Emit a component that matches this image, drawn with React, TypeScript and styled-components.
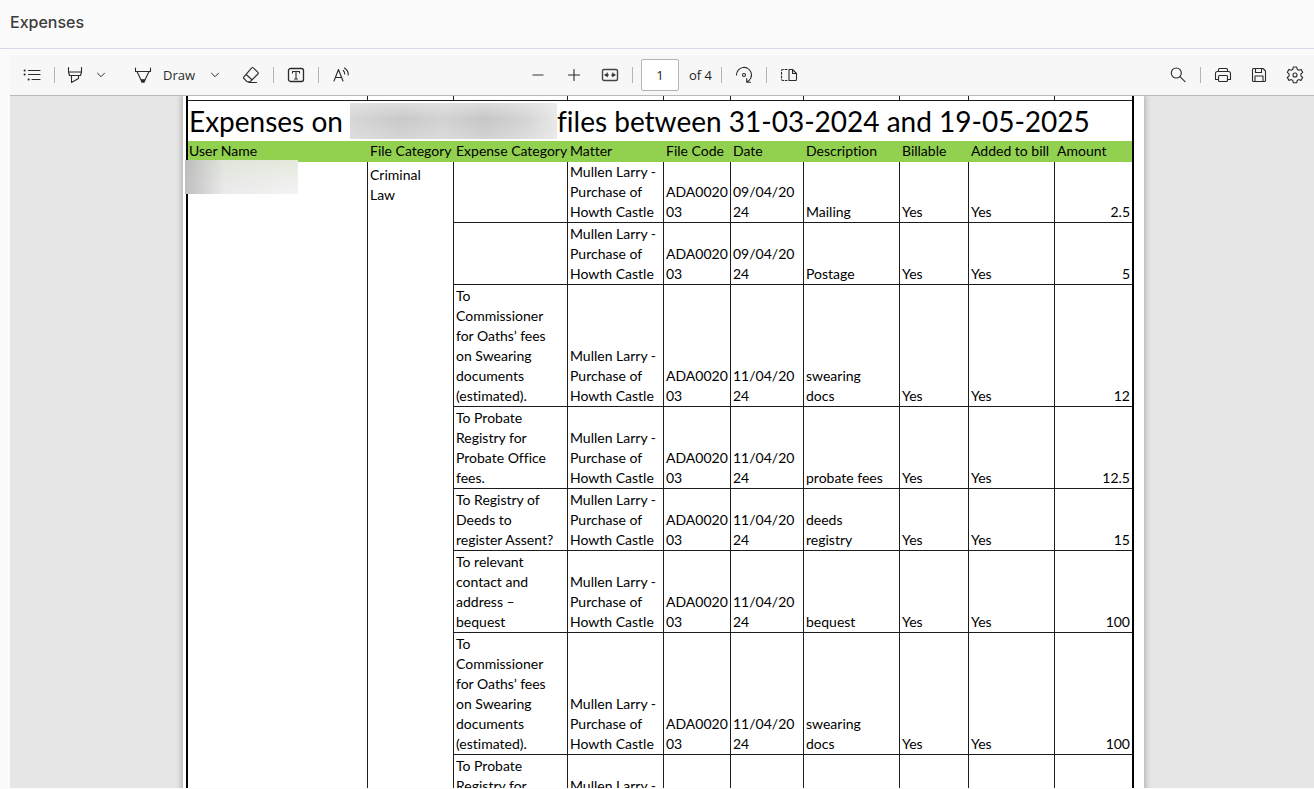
import React from 'react';
import styled, { createGlobalStyle } from 'styled-components';

const GlobalStyle = createGlobalStyle`
  *, *::before, *::after { box-sizing: border-box; }
  body { margin: 0; background: #fbfbfb; font-family: "Open Sans", sans-serif; color: #222; }
`;

const Shell = styled.div`
  display: flex;
  flex-direction: column;
  height: 100vh;
  padding-bottom: 1px;
  overflow: hidden;
`;

const TitleBar = styled.header`
  flex: none;
  height: 49px;
  padding: 0 10px;
  border-bottom: 1px solid #d9d9ea;
`;

const PageTitle = styled.h1`
  margin: 0;
  font: 500 16px/44px Inter, sans-serif;
  color: #3c3c3c;
`;

const Viewer = styled.main`
  flex: 1;
  min-height: 0;
  display: flex;
  flex-direction: column;
  margin: 6px 0 0 10px;
`;

const Toolbar = styled.div`
  flex: none;
  display: grid;
  grid-template-columns: 1fr auto 1fr;
  align-items: center;
  height: 41px;
  padding: 0 5px 0 8px;
  background: #f7f7f7;
  border-bottom: 1px solid #bababa;
`;

const ToolGroup = styled.div<{ $end?: boolean }>`
  display: flex;
  align-items: center;
  gap: 8px;
  justify-content: ${p => (p.$end ? 'flex-end' : 'flex-start')};
`;

const SplitTool = styled.div<{ $spaced?: boolean }>`
  display: flex;
  align-items: center;
  margin-left: ${p => (p.$spaced ? '6px' : '0')};
`;

const ToolButton = styled.button<{ $w?: number }>`
  display: flex;
  align-items: center;
  justify-content: center;
  width: ${p => p.$w ?? 28}px;
  height: 32px;
  padding: 0;
  border: 0;
  background: none;
  color: #2b2b2b;
`;

const DrawButton = styled(ToolButton)`
  width: 72px;
  padding-left: 5px;
  gap: 11px;
  justify-content: flex-start;
  font: 13px/20px "Open Sans", sans-serif;
`;

const Separator = styled.span`
  width: 1px;
  height: 16px;
  background: #b5b5b5;
`;

const PageField = styled.label`
  display: flex;
  align-items: center;
  gap: 10px;
  width: 72px;
  font-size: 13px;
  white-space: nowrap;
`;

const PageInput = styled.input`
  flex: none;
  width: 38px;
  height: 32px;
  padding: 0;
  border: 1px solid #b4b4b4;
  border-radius: 2px;
  background: #fff;
  color: #222;
  font: 13px "Open Sans", sans-serif;
  text-align: center;
`;

const Canvas = styled.div`
  flex: 1;
  min-height: 0;
  overflow: hidden;
  padding-left: 3px;
  background: #e6e6e6;
`;

const Sheet = styled.article`
  width: 961px;
  min-height: 100%;
  margin: 0 auto;
  padding: 0 10px 0 3px;
  background: #fff;
  box-shadow: 0 0 6px 1px rgba(0, 0, 0, 0.28);
`;

const Table = styled.table`
  width: 100%;
  table-layout: fixed;
  border-collapse: separate;
  border-spacing: 0;
  border-left: 2px solid #000;
  border-right: 2px solid #000;
  color: #000;
  font: 14px/20px Lato, sans-serif;
  font-variant-ligatures: none;
`;

const Cell = styled.td<{ $align?: string; $first?: boolean; $open?: boolean; $right?: boolean }>`
  padding: 0 2px;
  border-left: ${p => (p.$first ? '0' : '1px solid #1c1c1c')};
  border-bottom: ${p => (p.$open ? '0' : '1px solid #1c1c1c')};
  vertical-align: ${p => p.$align ?? 'bottom'};
  text-align: ${p => (p.$right ? 'right' : 'left')};
  white-space: pre;
`;

const SpanCell = styled(Cell)`
  position: relative;
  padding-top: 3px;
`;

const BannerCell = styled.th`
  height: 40px;
  padding: 0 1px;
  text-align: left;
  font: 28px/40px Lato, sans-serif;
  font-variant-ligatures: none;
`;

const Banner = styled.div`
  display: flex;
  align-items: center;
  white-space: nowrap;
`;

const BannerLead = styled.span`
  width: 161px;
`;

const HeadCell = styled.th<{ $first?: boolean }>`
  height: 21px;
  padding: 0 0 0 ${p => (p.$first ? 1 : 3)}px;
  background: #92d050;
  text-align: left;
  vertical-align: top;
  font-weight: 400;
  white-space: nowrap;
`;

const RedactedTitle = styled.span`
  width: 207px;
  height: 36px;
  background:
    linear-gradient(180deg, rgba(240, 240, 240, 0.5), rgba(240, 240, 240, 0) 45%, rgba(240, 240, 240, 0.3)),
    linear-gradient(90deg, #d6d6d6, #c9c9c9 25%, #d2d2d2 45%, #c6c6c6 65%, #d4d4d4 85%, #e8e8e8);
`;

const RedactedUser = styled.span`
  position: absolute;
  left: -3px;
  top: -2px;
  width: 113px;
  height: 34px;
  background:
    linear-gradient(90deg, rgba(185, 185, 185, 0.9), rgba(225, 225, 225, 0.5) 35%, rgba(240, 240, 240, 0.2)),
    linear-gradient(180deg, #dfe8d4, #eef0ec 60%, #f4f4f4);
`;

const Svg = ({ children, size = 18 }: { children: React.ReactNode; size?: number }) => (
  <svg width={size} height={size} viewBox={`0 0 ${size} ${size}`} fill="none" stroke="currentColor"
    strokeWidth="1.1" strokeLinecap="round" strokeLinejoin="round" aria-hidden="true">{children}</svg>
);

const Chevron = () => <Svg size={10}><path d="M1.5 3.2 5 6.7 8.5 3.2" strokeWidth="1" /></Svg>;

const columns: [string, number][] = [
  ['User Name', 179], ['File Category', 86], ['Expense Category', 114], ['Matter', 96], ['File Code', 67],
  ['Date', 73], ['Description', 96], ['Billable', 69], ['Added to bill', 86], ['Amount', 78],
];

const oaths = 'To\nCommissioner\nfor Oaths’ fees\non Swearing\ndocuments\n(estimated).';
const probate = 'To Probate\nRegistry for\nProbate Office\nfees.';

const rows: { h: number; category: string; date: string; description: string; amount: string }[] = [
  { h: 61, category: '', date: '09/04/20\n24', description: 'Mailing', amount: '2.5' },
  { h: 62, category: '', date: '09/04/20\n24', description: 'Postage', amount: '5' },
  { h: 122, category: oaths, date: '11/04/20\n24', description: 'swearing\ndocs', amount: '12' },
  { h: 82, category: probate, date: '11/04/20\n24', description: 'probate fees', amount: '12.5' },
  { h: 62, category: 'To Registry of\nDeeds to\nregister Assent?', date: '11/04/20\n24', description: 'deeds\nregistry', amount: '15' },
  { h: 82, category: 'To relevant\ncontact and\naddress –\nbequest', date: '11/04/20\n24', description: 'bequest', amount: '100' },
  { h: 122, category: oaths, date: '11/04/20\n24', description: 'swearing\ndocs', amount: '100' },
  { h: 82, category: probate, date: '', description: '', amount: '' },
];

const Row = styled.tr<{ $h: number }>`
  height: ${p => p.$h}px;
`;

export default function App() {
  return (
    <>
      <GlobalStyle />
      <Shell>
        <TitleBar><PageTitle>Expenses</PageTitle></TitleBar>
        <Viewer>
          <Toolbar role="toolbar" aria-label="Document tools">
            <ToolGroup>
              <ToolButton aria-label="Contents">
                <Svg><path d="M5.5 4.500h11.500M5.500 8.500h11.500M9 13.500h8" strokeWidth="1.200" /><path d="M1.500 4.500h.3M1.500 8.500h.3M5.500 13.500h.3" strokeWidth="1.800" /></Svg>
              </ToolButton>
              <Separator />
              <SplitTool>
                <ToolButton $w={24} aria-label="Highlight">
                  <Svg><path d="M2.500 1.500v4.500h13V1.500M2.500 6 3.500 9.500h11L15.500 6M5.500 9.500v7l7-4v-3" /></Svg>
                </ToolButton>
                <ToolButton aria-label="Highlight options"><Chevron /></ToolButton>
              </SplitTool>
              <SplitTool $spaced>
                <DrawButton>
                  <Svg><path d="M1.500 2v3.500h15V2M3 5.500l5 10.500h2l5-10.500" /><path d="M7.300 13.800h3.400L10 16H8Z" fill="currentColor" /></Svg>
                  Draw
                </DrawButton>
                <ToolButton aria-label="Draw options"><Chevron /></ToolButton>
              </SplitTool>
              <ToolButton aria-label="Erase">
                <Svg><path d="M9.700 1.900q.8-.7 1.600 0l4.600 4.500q.8.800 0 1.600L8.500 15.400q-.5.500-1.200.5H6q-.7 0-1.200-.5L1.900 12.500q-.8-.8 0-1.600ZM4.200 8.500l6 5.500M7 16.500h7.500" /></Svg>
              </ToolButton>
              <Separator />
              <ToolButton aria-label="Add text">
                <Svg><rect x="1.500" y="2.500" width="15" height="13" rx="2" strokeWidth="1.300" /><path d="M5.500 7V5.500h7V7M9 5.500v7.500M7.500 13h3" /></Svg>
              </ToolButton>
              <Separator />
              <ToolButton aria-label="Read aloud">
                <Svg><path d="M2 15 6.500 3.500l4.500 11.500M3.500 11.500h6M11.200 4.500q1.500 1.300 1.500 3.500M12.500 2q4.300 3 3.700 7" /></Svg>
              </ToolButton>
            </ToolGroup>
            <ToolGroup>
              <ToolButton aria-label="Zoom out"><Svg><path d="M4 9h10" stroke="#777" strokeWidth="1.500" /></Svg></ToolButton>
              <ToolButton aria-label="Zoom in"><Svg><path d="M3.500 9h11M9 3.500v11" /></Svg></ToolButton>
              <ToolButton aria-label="Fit to width">
                <Svg><rect x="1.500" y="3.500" width="15" height="11" rx="1.500" stroke="#444" strokeWidth="1.400" /><path d="M4 9h3.500M10.500 9H14" /><path d="M6.500 7v4L4 9ZM11.500 7v4L14 9Z" fill="currentColor" strokeWidth=".5" /></Svg>
              </ToolButton>
              <Separator />
              <PageField><PageInput aria-label="Page number" defaultValue="1" />of 4</PageField>
              <Separator />
              <ToolButton aria-label="Rotate">
                <Svg><path d="M1.500 9A7.500 7.500 0 1 1 12 15.800M11.700 12.500v3.700h3.800" /><circle cx="9" cy="9" r="1.500" /></Svg>
              </ToolButton>
              <Separator />
              <ToolButton aria-label="Page view">
                <Svg><path d="M9 3.500h3.500l4 4v6q0 1-1 1H9ZM12.500 3.500v4h4" /><path d="M7 3.500H3q-1.500 0-1.500 1.500v8q0 1.500 1.500 1.500h4" strokeDasharray="2 1.700" /></Svg>
              </ToolButton>
            </ToolGroup>
            <ToolGroup $end>
              <ToolButton aria-label="Search">
                <Svg><circle cx="7.300" cy="7" r="5" /><path d="m11 10.700 5 5" /></Svg>
              </ToolButton>
              <Separator />
              <ToolButton aria-label="Print">
                <Svg><path d="M4.500 5.500v-2q0-1 1-1h7q1 0 1 1v2M4.500 13.500h-3v-6q0-2 2-2h11q2 0 2 2v6h-3" /><rect x="4.500" y="9.500" width="9" height="6" rx="1" /></Svg>
              </ToolButton>
              <ToolButton aria-label="Save">
                <Svg><path d="M3.500 2.500h9.500l2.500 2.500v9.500q0 1-1 1h-11q-1 0-1-1v-11q0-1 1-1ZM5.500 2.500v4h6v-4M5 15.500V10h8v5.500" /></Svg>
              </ToolButton>
              <ToolButton aria-label="Settings">
                <Svg><path d="M7.300 1h3.400l.5 2.300 1.500.9 2.300-.8 1.700 2.900-1.800 1.600v2l1.800 1.600-1.700 2.900-2.300-.8-1.500.9-.5 2.300H7.300l-.5-2.300-1.500-.9-2.300.8-1.700-2.900 1.800-1.600v-2L1.300 6.300 3 3.400l2.300.8 1.500-.9Z" /><circle cx="9" cy="9" r="2" /></Svg>
              </ToolButton>
            </ToolGroup>
          </Toolbar>
          <Canvas>
            <Sheet>
              <Table>
                <colgroup>{columns.map(([name, w]) => <col key={name} width={w} />)}</colgroup>
                <thead>
                  <Row $h={5} aria-hidden="true">
                    {columns.map(([name], i) => <Cell key={name} $first={i === 0} />)}
                  </Row>
                  <tr>
                    <BannerCell colSpan={10}>
                      <Banner>
                        <BannerLead>Expenses on</BannerLead>
                        <RedactedTitle />
                        files between 31-03-2024 and 19-05-2025
                      </Banner>
                    </BannerCell>
                  </tr>
                  <tr>{columns.map(([name], i) => <HeadCell key={name} $first={i === 0} scope="col">{name}</HeadCell>)}</tr>
                </thead>
                <tbody>
                  {rows.map((r, i) => (
                    <Row key={i} $h={r.h}>
                      {i === 0 && <SpanCell rowSpan={rows.length} $first $open $align="top"><RedactedUser /></SpanCell>}
                      {i === 0 && <SpanCell rowSpan={rows.length} $open $align="top">{'Criminal\nLaw'}</SpanCell>}
                      <Cell $align="middle">{r.category}</Cell>
                      <Cell>{'Mullen Larry -\nPurchase of\nHowth Castle'}</Cell>
                      <Cell>{r.date && 'ADA0020\n03'}</Cell>
                      <Cell>{r.date}</Cell>
                      <Cell>{r.description}</Cell>
                      <Cell>{r.date && 'Yes'}</Cell>
                      <Cell>{r.date && 'Yes'}</Cell>
                      <Cell $right>{r.amount}</Cell>
                    </Row>
                  ))}
                </tbody>
              </Table>
            </Sheet>
          </Canvas>
        </Viewer>
      </Shell>
    </>
  );
}
